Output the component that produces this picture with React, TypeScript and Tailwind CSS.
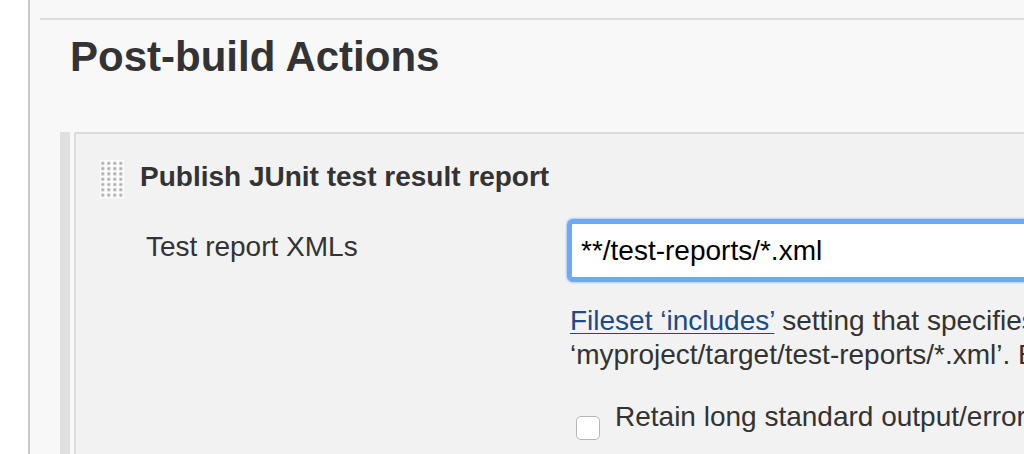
import React from 'react';

// Drag handle: soft grid of dots, 4 columns x 7 rows
const DragHandle = () => {
  const dots = [];
  for (let r = 0; r < 7; r++) {
    for (let c = 0; c < 4; c++) {
      dots.push(<rect key={`${r}-${c}`} x={1 + c * 6} y={1.5 + r * 5.3} width={3.6} height={3.6} rx={1.2} fill="url(#dot)" />);
    }
  }
  return (
    <svg width="24" height="38" viewBox="0 0 24 38" className="shrink-0">
      <defs>
        <radialGradient id="dot">
          <stop offset="0%" stopColor="#a4a4a4" />
          <stop offset="100%" stopColor="#d4d4d4" />
        </radialGradient>
      </defs>
      <rect width="24" height="38" fill="#fbfbfb" />
      {dots}
    </svg>
  );
};

export default function App() {
  return (
    <div className="flex h-[454px] w-full overflow-hidden bg-white font-['Liberation_Sans',Arial,sans-serif] text-[#333333]">
      <div className="w-[28px] shrink-0" />
      <div className="min-w-0 flex-1 overflow-hidden border-l-2 border-[#c8c8c8] bg-[#f8f8f8] pl-[10px] pt-[18px]">
        <div className="h-[2px] bg-[#dcdcdc]" />
        <h2 className="ml-[30px] mt-[16px] text-[42px] font-bold leading-[42px] whitespace-nowrap">Post-build Actions</h2>

        <div className="ml-[20px] mt-[54px] flex h-[400px]">
          <div className="w-[10px] shrink-0 bg-[#e0e0e0]" />
          <div className="w-[4px] shrink-0" />
          <div className="flex-1 border-l-2 border-t-2 border-[#dcdcdc] bg-[#f2f2f2]">
            {/* section header */}
            <div className="flex items-center gap-[16px] pl-[24px] pt-[24px]">
              <DragHandle />
              <span className="pb-[3px] text-[28px] font-bold leading-[38px] whitespace-nowrap">Publish JUnit test result report</span>
            </div>

            {/* field row */}
            <div className="mt-[20px] flex items-start">
              <div className="w-[491px] shrink-0 pl-[70px] pt-[12px] text-[28px] leading-[32px] whitespace-nowrap">Test report XMLs</div>
              <div className="w-[620px] shrink-0">
                <input
                  readOnly
                  value="**/test-reports/*.xml"
                  className="h-[63px] w-full rounded-[6px] border-[5px] border-[#6ea9f3] bg-white pl-[9px] text-[28px] text-black shadow-[0_0_2px_1px_#a9cdf8] outline-none"
                />
                <div className="ml-[3px] mt-[22px] text-[28px] leading-[34px] whitespace-nowrap">
                  <div>
                    <a href="#" className="text-[#204a87] underline decoration-1 underline-offset-[3px]">Fileset ‘includes’</a> setting that specifies the generated raw XML report files, such as
                  </div>
                  <div>‘myproject/target/test-reports/*.xml’. Basedir of the fileset is the workspace root.</div>
                </div>
                <div className="mt-[28px] flex items-start">
                  <span className="ml-[9px] mt-[16px] h-[24px] w-[24px] shrink-0 rounded-[5px] border border-[#b5b5b5] bg-white" />
                  <span className="ml-[15px] text-[28px] leading-[34px] whitespace-nowrap">Retain long standard output/error messages</span>
                </div>
              </div>
            </div>
          </div>
        </div>
      </div>
    </div>
  );
}
